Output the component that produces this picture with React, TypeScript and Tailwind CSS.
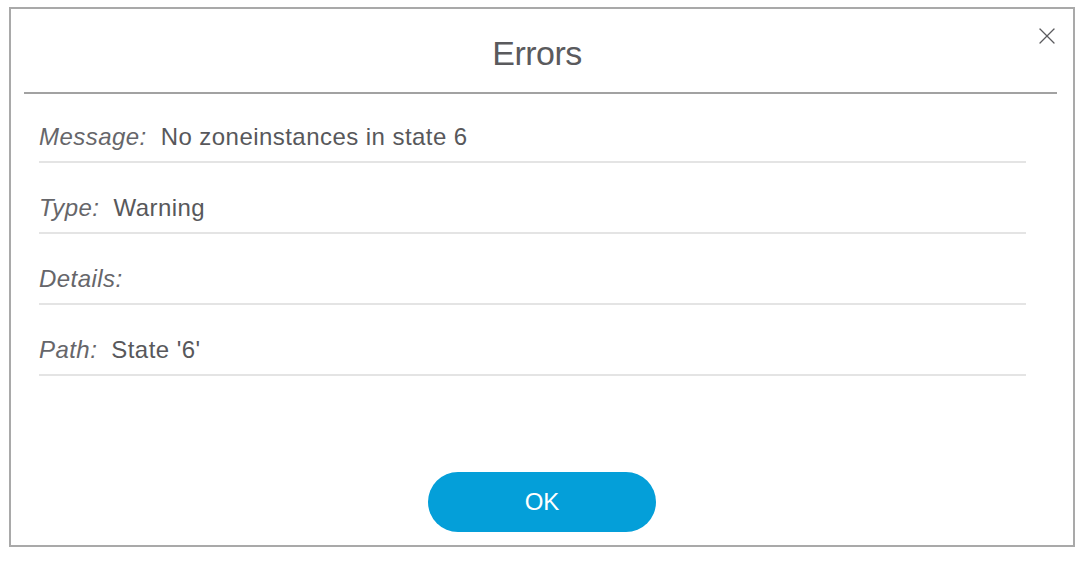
import { X } from "lucide-react";

const rows = [
  { label: "Message:", value: "No zoneinstances in state 6" },
  { label: "Type:", value: "Warning" },
  { label: "Details:", value: "" },
  { label: "Path:", value: "State '6'" },
];

export default function App() {
  return (
    <main
      className="w-[1088px] h-[562px] bg-white pt-[7px] pl-[9px]"
      style={{ fontFamily: '"Liberation Sans", Arial, sans-serif' }}
    >
      <div className="relative w-[1066px] h-[540px] border-2 border-[#a9a9a9] flex flex-col">
        {/* Header */}
        <div className="mx-[13px] mr-[16px] h-[85px] border-b-2 border-[#a2a2a2] flex items-center justify-center pt-[6px] pr-[7px]">
          <h1 className="text-[34px] font-light text-[#5a5a5d] tracking-[-0.5px]">Errors</h1>
        </div>
        <button className="absolute top-[13px] right-[12px] text-[#5b5b5e]">
          <X size={28} strokeWidth={1.1} />
        </button>

        {/* Rows */}
        <div className="ml-[28px] mr-[47px] -mt-[2px]">
          {rows.map((r) => (
            <div
              key={r.label}
              className="h-[71px] border-b-2 border-[#e4e4e4] flex items-end pb-[9px] text-[24px] leading-[30px] tracking-[0.45px] text-[#58585b]"
            >
              <span className="italic text-[#66666a]">{r.label}</span>
              {r.value && <span className="ml-[14px]">{r.value}</span>}
            </div>
          ))}
        </div>

        <div className="flex-1" />

        {/* Footer */}
        <div className="flex justify-center pb-[13px]">
          <button className="w-[228px] h-[60px] rounded-full bg-[#049fd9] text-white text-[24px]">
            OK
          </button>
        </div>
      </div>
    </main>
  );
}
